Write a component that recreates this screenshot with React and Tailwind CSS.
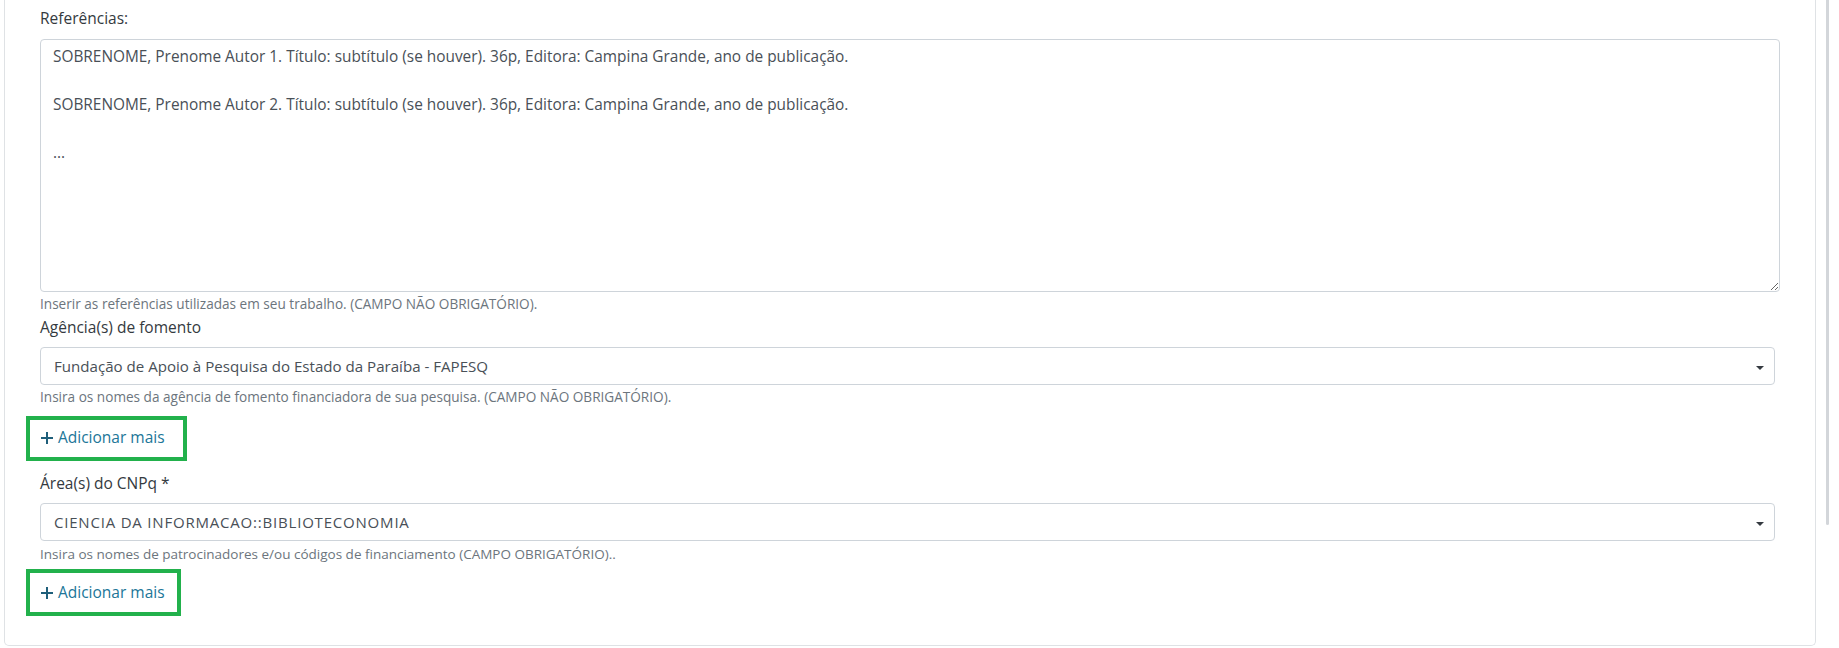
import React from 'react'

const refs = `SOBRENOME, Prenome Autor 1. Título: subtítulo (se houver). 36p, Editora: Campina Grande, ano de publicação.

SOBRENOME, Prenome Autor 2. Título: subtítulo (se houver). 36p, Editora: Campina Grande, ano de publicação.

...`

function Caret() {
  return (
    <svg width="8" height="4" viewBox="0 0 8 4" className="shrink-0">
      <path d="M0 0h8L4 4z" fill="#343a40" />
    </svg>
  )
}

function FakeSelect({ value, textClass }) {
  return (
    <div className="mr-[5px] h-[38px] flex items-center justify-between rounded-[4px] border border-[#ced4da] bg-white pl-[13px] pr-[10px] text-[#495057]">
      <span className={textClass}>{value}</span>
      <span className="pt-[3px]"><Caret /></span>
    </div>
  )
}

function AddMore({ className }) {
  return (
    <div className={`-ml-[14px] flex items-start border-[4px] border-[#22b14c] pl-[11px] ${className}`}>
      <a className="flex items-center gap-[5px] text-[15.5px] text-[#207698]">
        <svg width="12" height="12" viewBox="0 0 12 12">
          <path d="M6 0v12M0 6h12" stroke="#1f5f7a" strokeWidth="2" />
        </svg>
        Adicionar mais
      </a>
    </div>
  )
}

export default function App() {
  return (
    <div className="flex h-[648px] w-[1839px] overflow-hidden bg-white font-['Open_Sans',sans-serif]">
      <div className="w-[4px] shrink-0" />

      {/* form card */}
      <div className="h-[646px] w-[1812px] shrink-0 rounded-b-[5px] border-x border-b border-[#dfe2e5] px-[35px] pt-[8px]">
        <label className="block leading-[21px] text-[15.5px] text-[#343a40]">Referências:</label>
        <textarea
          readOnly
          defaultValue={refs}
          className="mt-[10px] block h-[253px] w-full rounded-[4px] border border-[#ced4da] px-[12px] pt-[5px] text-[15.4px] leading-[24px] text-[#495057] outline-none"
        />
        <p className="mt-[3px] leading-[18px] text-[13.6px] text-[#6c757d]">
          Inserir as referências utilizadas em seu trabalho. (CAMPO NÃO OBRIGATÓRIO).
        </p>

        <label className="mt-[4px] block leading-[21px] text-[15.5px] text-[#343a40]">Agência(s) de fomento</label>
        <div className="mt-[9px]">
          <FakeSelect value="Fundação de Apoio à Pesquisa do Estado da Paraíba - FAPESQ" textClass="text-[15.1px]" />
        </div>
        <p className="mt-[3px] leading-[18px] text-[13.6px] text-[#6c757d]">
          Insira os nomes da agência de fomento financiadora de sua pesquisa. (CAMPO NÃO OBRIGATÓRIO).
        </p>
        <AddMore className="mt-[10px] h-[45px] w-[161px] pt-[6px]" />

        <label className="mt-[12px] block leading-[21px] text-[15.5px] text-[#343a40]">Área(s) do CNPq *</label>
        <div className="mt-[9px]">
          <FakeSelect value="CIENCIA DA INFORMACAO::BIBLIOTECONOMIA" textClass="text-[15px] tracking-[0.8px]" />
        </div>
        <p className="mt-[4px] leading-[18px] text-[13.5px] text-[#6c757d]">
          Insira os nomes de patrocinadores e/ou códigos de financiamento (CAMPO OBRIGATÓRIO)..
        </p>
        <AddMore className="mt-[6px] h-[47px] w-[155px] pt-[8px]" />
      </div>

      {/* scrollbar thumb */}
      <div className="ml-[10px] h-[525px] w-[3px] shrink-0 rounded-b-full bg-[#d3d6da]" />
    </div>
  )
}
